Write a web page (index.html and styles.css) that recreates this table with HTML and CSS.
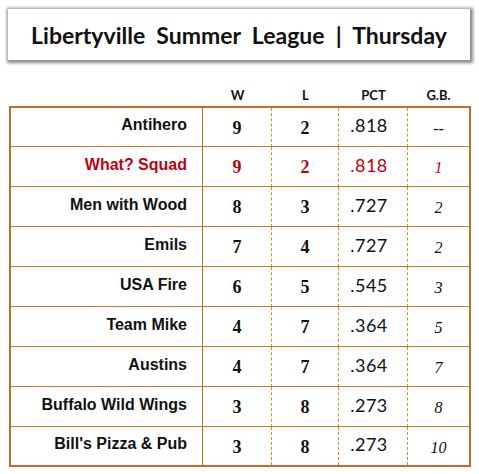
FILE: index.html
```html
<!DOCTYPE html>
<html>
<head>
<meta charset="utf-8">
<link rel="stylesheet" href="styles.css">
</head>
<body>
<div class="title">Libertyville  Summer  League  |  Thursday</div>
<div class="head">
  <div></div><div>W</div><div>L</div><div>PCT</div><div>G.B.</div>
</div>
<table class="standings">
  <colgroup><col class="c-name"><col class="c-num"><col class="c-l"><col class="c-num"><col class="c-gb"></colgroup>
  <tbody>
    <tr><td class="name">Antihero</td><td class="num">9</td><td class="num">2</td><td class="pct">.818</td><td class="gb">--</td></tr>
    <tr class="red"><td class="name">What? Squad</td><td class="num">9</td><td class="num">2</td><td class="pct">.818</td><td class="gb">1</td></tr>
    <tr><td class="name">Men with Wood</td><td class="num">8</td><td class="num">3</td><td class="pct">.727</td><td class="gb">2</td></tr>
    <tr><td class="name">Emils</td><td class="num">7</td><td class="num">4</td><td class="pct">.727</td><td class="gb">2</td></tr>
    <tr><td class="name">USA Fire</td><td class="num">6</td><td class="num">5</td><td class="pct">.545</td><td class="gb">3</td></tr>
    <tr><td class="name">Team Mike</td><td class="num">4</td><td class="num">7</td><td class="pct">.364</td><td class="gb">5</td></tr>
    <tr><td class="name">Austins</td><td class="num">4</td><td class="num">7</td><td class="pct">.364</td><td class="gb">7</td></tr>
    <tr><td class="name">Buffalo Wild Wings</td><td class="num">3</td><td class="num">8</td><td class="pct">.273</td><td class="gb">8</td></tr>
    <tr><td class="name">Bill's Pizza &amp; Pub</td><td class="num">3</td><td class="num">8</td><td class="pct">.273</td><td class="gb">10</td></tr>
  </tbody>
</table>
</body>
</html>
```
FILE: styles.css
```css
html, body {
  margin: 0;
  padding: 0;
  background: #ffffff;
}
body {
  width: 479px;
  height: 474px;
  overflow: hidden;
}
.title {
  margin: 9px 0 0 8px;
  width: 462px;
  height: 51px;
  box-sizing: border-box;
  background: #fff;
  box-shadow: 1px 1px 3px 2px #8a8a8a;
  font-family: Lato, "Open Sans", sans-serif;
  font-weight: 700;
  font-size: 23px;
  color: #111;
  white-space: pre;
  text-align: center;
  line-height: 52px;
}
.head {
  display: grid;
  grid-template-columns: 192px 69px 67px 69px 61px;
  margin: 25px 0 0 11px;
  height: 21px;
  font-family: Lato, "Open Sans", sans-serif;
  font-weight: 700;
  font-size: 13px;
  color: #111;
  text-align: center;
  line-height: 21px;
}
.standings {
  margin: 0 0 0 9px;
  width: 462px;
  border: 2px solid #c06e24;
  border-collapse: separate;
  border-spacing: 0;
  table-layout: fixed;
}
.c-name { width: 192px; }
.c-num { width: 69px; }
.c-l { width: 67px; }
.c-gb { width: 61px; }
.standings td {
  padding: 0;
  height: 40px;
  box-sizing: border-box;
  border-bottom: 1px solid #c87a30;
  border-right: 1px dashed #d88a38;
  text-align: center;
  color: #111;
}
.standings tr:first-child td { height: 39px; }
.standings tr:last-child td { border-bottom: none; height: 38px; }
.standings td:last-child { border-right: none; }
.standings td.name {
  border-right: 1px solid #c06e24;
  text-align: right;
  padding-right: 15px;
  font-family: "Liberation Sans", Arial, sans-serif;
  font-weight: 700;
  font-size: 16px;
  padding-bottom: 4px;
}
.standings td.num {
  font-family: "Liberation Serif", "Times New Roman", serif;
  font-weight: 700;
  font-size: 18px;
  padding-top: 2px;
}
.standings td.pct {
  font-family: Lato, "Open Sans", sans-serif;
  font-size: 18px;
  letter-spacing: 0.5px;
  padding-right: 8px;
  padding-bottom: 4px;
}
.standings td.gb {
  font-family: "Liberation Serif", "Times New Roman", serif;
  font-style: italic;
  font-size: 16px;
  padding-top: 3px;
}
.standings tr.red td { color: #c00010; }
```
